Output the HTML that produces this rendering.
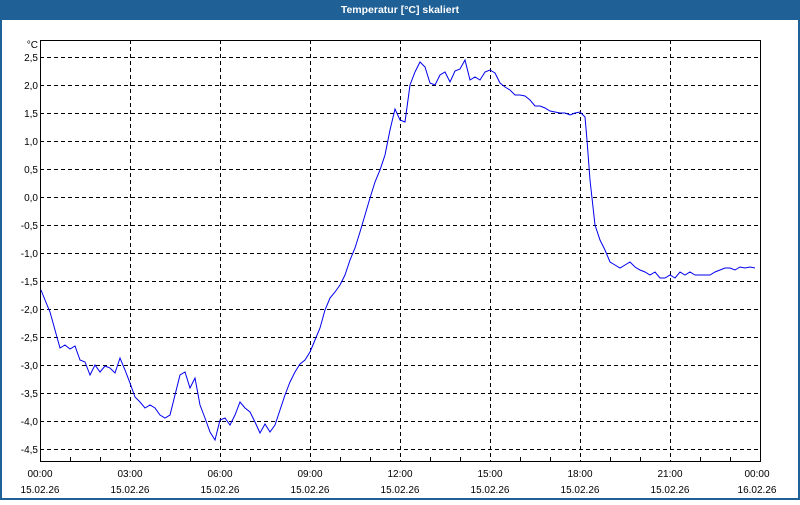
<!DOCTYPE html>
<html><head><meta charset="utf-8"><style>
body{margin:0;width:800px;height:500px;overflow:hidden;background:#fff;font-family:"Liberation Sans",sans-serif}
</style></head><body>
<svg width="800" height="500" xmlns="http://www.w3.org/2000/svg" font-family="Liberation Sans, sans-serif" font-size="10">
<rect x="0" y="0" width="800" height="500" fill="#1f6096"/>
<rect x="2" y="20" width="796" height="478" fill="#fff"/>
<text x="400" y="13" fill="#fff" font-weight="bold" font-size="10.5" text-anchor="middle">Temperatur [°C] skaliert</text>
<g stroke="#000" stroke-width="1" stroke-dasharray="4,3" shape-rendering="crispEdges">
<line x1="130.5" y1="40" x2="130.5" y2="461"/><line x1="220.5" y1="40" x2="220.5" y2="461"/><line x1="310.5" y1="40" x2="310.5" y2="461"/><line x1="400.5" y1="40" x2="400.5" y2="461"/><line x1="490.5" y1="40" x2="490.5" y2="461"/><line x1="580.5" y1="40" x2="580.5" y2="461"/><line x1="670.5" y1="40" x2="670.5" y2="461"/>
<line x1="40" y1="57.5" x2="760" y2="57.5"/><line x1="40" y1="85.5" x2="760" y2="85.5"/><line x1="40" y1="113.5" x2="760" y2="113.5"/><line x1="40" y1="141.5" x2="760" y2="141.5"/><line x1="40" y1="169.5" x2="760" y2="169.5"/><line x1="40" y1="197.5" x2="760" y2="197.5"/><line x1="40" y1="225.5" x2="760" y2="225.5"/><line x1="40" y1="253.5" x2="760" y2="253.5"/><line x1="40" y1="281.5" x2="760" y2="281.5"/><line x1="40" y1="309.5" x2="760" y2="309.5"/><line x1="40" y1="337.5" x2="760" y2="337.5"/><line x1="40" y1="365.5" x2="760" y2="365.5"/><line x1="40" y1="393.5" x2="760" y2="393.5"/><line x1="40" y1="421.5" x2="760" y2="421.5"/><line x1="40" y1="449.5" x2="760" y2="449.5"/>
</g>
<rect x="40.5" y="40.5" width="720" height="421" fill="none" stroke="#000" shape-rendering="crispEdges"/>
<g stroke="#000" shape-rendering="crispEdges">
<line x1="70.5" y1="457" x2="70.5" y2="461"/><line x1="100.5" y1="457" x2="100.5" y2="461"/><line x1="160.5" y1="457" x2="160.5" y2="461"/><line x1="190.5" y1="457" x2="190.5" y2="461"/><line x1="250.5" y1="457" x2="250.5" y2="461"/><line x1="280.5" y1="457" x2="280.5" y2="461"/><line x1="340.5" y1="457" x2="340.5" y2="461"/><line x1="370.5" y1="457" x2="370.5" y2="461"/><line x1="430.5" y1="457" x2="430.5" y2="461"/><line x1="460.5" y1="457" x2="460.5" y2="461"/><line x1="520.5" y1="457" x2="520.5" y2="461"/><line x1="550.5" y1="457" x2="550.5" y2="461"/><line x1="610.5" y1="457" x2="610.5" y2="461"/><line x1="640.5" y1="457" x2="640.5" y2="461"/><line x1="700.5" y1="457" x2="700.5" y2="461"/><line x1="730.5" y1="457" x2="730.5" y2="461"/>
</g>
<g text-anchor="end" fill="#000">
<text x="38" y="48">°C</text>
<text x="38" y="61">2,5</text><text x="38" y="89">2,0</text><text x="38" y="117">1,5</text><text x="38" y="145">1,0</text><text x="38" y="173">0,5</text><text x="38" y="201">0,0</text><text x="38" y="229">-0,5</text><text x="38" y="257">-1,0</text><text x="38" y="285">-1,5</text><text x="38" y="313">-2,0</text><text x="38" y="341">-2,5</text><text x="38" y="369">-3,0</text><text x="38" y="397">-3,5</text><text x="38" y="425">-4,0</text><text x="38" y="453">-4,5</text>
</g>
<g text-anchor="middle" fill="#000">
<text x="40" y="477">00:00</text><text x="40" y="493">15.02.26</text>
<text x="130" y="477">03:00</text><text x="130" y="493">15.02.26</text>
<text x="220" y="477">06:00</text><text x="220" y="493">15.02.26</text>
<text x="310" y="477">09:00</text><text x="310" y="493">15.02.26</text>
<text x="400" y="477">12:00</text><text x="400" y="493">15.02.26</text>
<text x="490" y="477">15:00</text><text x="490" y="493">15.02.26</text>
<text x="580" y="477">18:00</text><text x="580" y="493">15.02.26</text>
<text x="670" y="477">21:00</text><text x="670" y="493">15.02.26</text>
<text x="757" y="477">00:00</text><text x="757" y="493">16.02.26</text>
</g>
<polyline fill="none" stroke="#0000ee" stroke-width="1" points="41,290 45,300 50,312 55,330 60,348 65,345 70,349 75,346 80,360 85,362 90,375 95,365 100,372 105,366 110,368 115,373 120,358 125,370 130,383 135,397 140,402 145,408 150,405 155,408 160,415 165,418 170,415 175,395 180,375 185,372 190,388 195,378 200,405 205,418 210,432 215,440 220,420 225,418 230,425 235,415 240,402 245,408 250,412 255,422 260,433 265,424 270,432 275,425 280,410 285,395 290,382 295,372 300,364 305,360 310,352 315,340 320,328 325,310 330,298 335,292 340,285 345,275 350,260 355,248 360,232 365,215 370,198 375,182 380,170 385,155 390,130 395,109 400,120 405,122 410,85 415,72 420,62 425,67 430,83 435,85 440,75 445,72 450,82 455,71 460,69 465,60 470,80 475,77 480,80 485,72 490,70 495,73 500,83 505,87 510,90 515,95 520,95 525,96 530,100 535,106 540,106 545,108 550,111 555,112 560,113 565,113 570,115 575,113 580,112 585,117 587,140 590,180 595,225 600,240 605,250 610,262 615,265 620,268 625,265 630,262 635,267 640,270 645,272 650,275 655,272 660,278 665,278 670,275 675,278 680,272 685,275 690,272 695,275 700,275 705,275 710,275 715,272 720,270 725,268 730,268 735,270 740,267 745,268 750,267 755,268"/>
</svg>
</body></html>
